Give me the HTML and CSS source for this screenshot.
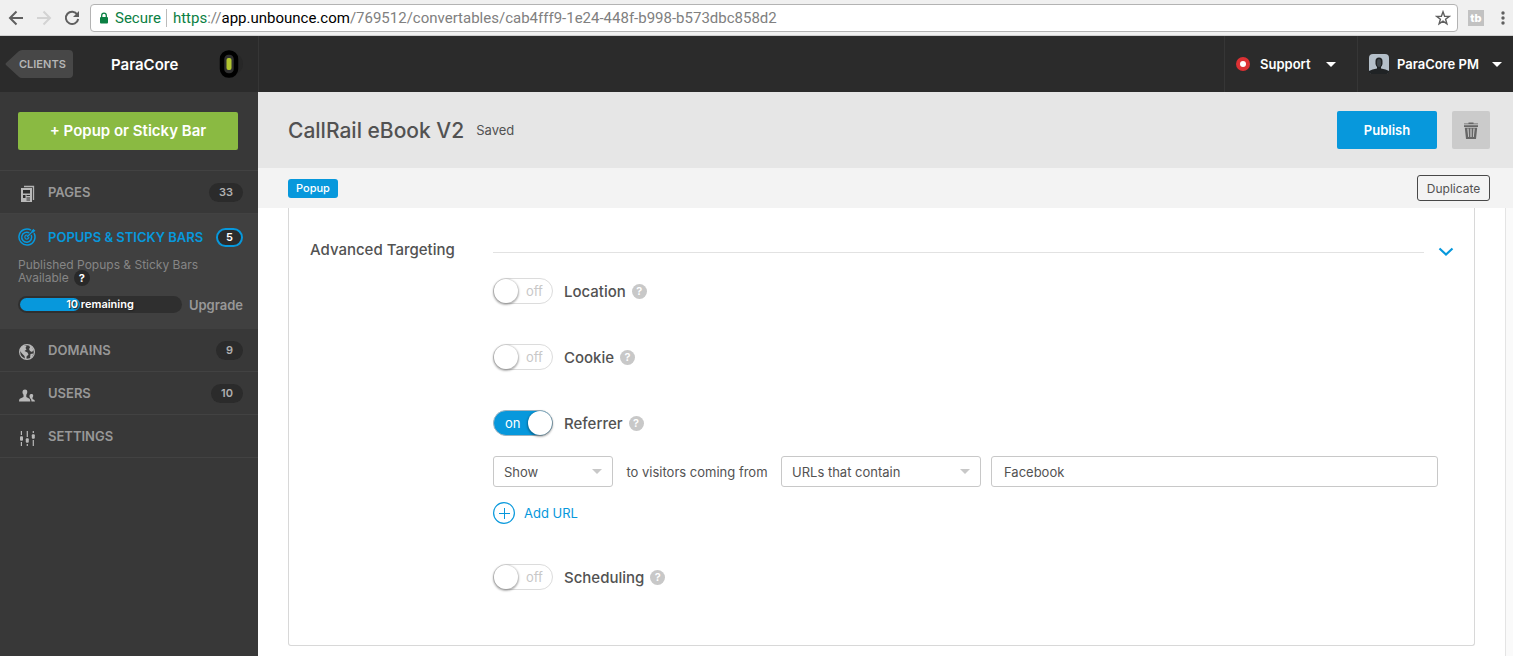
FILE: index.html
```html
<!DOCTYPE html>
<html lang="en">
<head>
    <meta charset="UTF-8">
    <meta name="viewport" content="width=device-width, initial-scale=1">
    <title>CallRail eBook V2</title>
    <link rel="stylesheet" href="styles.css">
</head>
<body>
    <!-- Browser bar -->
    <div class="browser-bar">
        <button type="button" class="browser-btn" aria-label="Back">
            <svg width="16" height="16" viewBox="0 0 16 16" fill="none" stroke="#5f5f5f" stroke-width="2"><path d="M15 8H2.500M8.500 1.500L2 8l6.500 6.500"/></svg>
        </button>
        <button type="button" class="browser-btn" aria-label="Forward">
            <svg width="16" height="16" viewBox="0 0 16 16" fill="none" stroke="#d3d3d3" stroke-width="2"><path d="M1 8h12.500M7.500 1.500L14 8l-6.500 6.500"/></svg>
        </button>
        <button type="button" class="browser-btn" aria-label="Reload">
            <svg width="16" height="16" viewBox="0 0 16 16" fill="none" stroke="#5f5f5f" stroke-width="2"><path d="M13.300 4.500A6.200 6.200 0 1 0 14.200 9"/><path d="M15 1v6H9z" fill="#5f5f5f" stroke="none"/></svg>
        </button>
        <div class="address">
            <svg width="10" height="12" viewBox="0 0 10 12"><rect x="1" y="5" width="8" height="6.500" rx="1" fill="#0b8043"/><path d="M2.700 5.500V3.500a2.300 2.300 0 0 1 4.600 0v2" fill="none" stroke="#0b8043" stroke-width="1.300"/></svg>
            <span class="secure">Secure</span>
            <span class="url"><span class="scheme">https</span>://<span class="host">app.unbounce.com</span>/769512/convertables/cab4fff9-1e24-448f-b998-b573dbc858d2</span>
            <button type="button" class="browser-btn star" aria-label="Bookmark this page">
                <svg width="16" height="16" viewBox="0 0 16 16" fill="none" stroke="#5f5f5f" stroke-width="1.400"><path d="M8 1.800l1.600 4.400 4.700.2-3.700 2.900 1.300 4.500L8 11.200l-3.900 2.600 1.300-4.500L1.700 6.400l4.700-.2z"/></svg>
            </button>
        </div>
        <button type="button" class="browser-btn extension" aria-label="Extension">tb</button>
        <button type="button" class="browser-btn browser-menu" aria-label="Browser menu">
            <svg width="4" height="16" viewBox="0 0 4 16" fill="#5f5f5f"><circle cx="2" cy="3" r="1.700"/><circle cx="2" cy="8" r="1.700"/><circle cx="2" cy="13" r="1.700"/></svg>
        </button>
    </div>

    <!-- App header -->
    <header class="app-header">
        <div class="account">
            <a href="#" class="clients-link">
                <svg width="68" height="28" viewBox="0 0 68 28"><path d="M13.500 1.500Q15 0 17 0H64a4 4 0 0 1 4 4v20a4 4 0 0 1-4 4H17q-2 0-3.500-1.500L1 15q-1-1 0-2z" fill="#474747"/></svg>
                <span>CLIENTS</span>
            </a>
            <span class="client-name">ParaCore</span>
            <svg class="client-logo" width="24" height="28" viewBox="0 0 24 28"><circle cx="13" cy="14" r="11" fill="#272727"/><rect x="3" y="2.500" width="14" height="23" rx="6.500" fill="#303030" stroke="#000" stroke-width="4.500"/><rect x="7.500" y="8" width="5" height="12" rx="2" fill="#b2c52f"/></svg>
        </div>
        <button type="button" class="header-menu support">
            <svg width="14" height="14" viewBox="0 0 14 14"><circle cx="7" cy="7" r="7" fill="#dc3134"/><circle cx="7" cy="7" r="3" fill="#fff"/></svg>
            Support
            <span class="caret"></span>
        </button>
        <button type="button" class="header-menu user">
            <svg width="20" height="20" viewBox="0 0 20 20"><rect width="20" height="20" rx="4" fill="#b4bfc9"/><path d="M6.500 7q0-3.500 3.500-3.500t3.500 3.500v3q-.4 2-1.500 3v1.500q5 .5 8 2.500v1q0 2-4 2H4q-4 0-4-2v-1q3-2 8-2.500V13q-1.100-1-1.500-3z" fill="#202325"/><path d="M8 8q0-3 2-3t2 3v3q-.8 2-2 2t-2-2z" fill="#3d4449"/></svg>
            ParaCore PM
            <span class="caret"></span>
        </button>
    </header>

    <div class="layout">
        <aside class="sidebar">
            <div class="create">
                <button type="button" class="btn btn-create">+ Popup or Sticky Bar</button>
            </div>
            <nav>
                <a href="#" class="nav-item">
                    <svg width="18" height="18" viewBox="0 0 18 18"><path d="M6 1.500h9.500V15" fill="none" stroke="#b3b3b3" stroke-width="1.300"/><path d="M3 3h11v14H3z" fill="#b9b9b9"/><path d="M5 5h7v3.500H5zM5 10h2.500v3H5zM8.500 10H12v1H8.500zM8.500 12.400H12v1H8.500zM8.500 14.500H12v1H8.500z" fill="#2f2f2f"/></svg>
                    <span class="nav-text">PAGES</span>
                    <span class="count">33</span>
                </a>
                <div class="nav-group">
                    <a href="#" class="nav-item active">
                        <svg width="18" height="18" viewBox="0 0 18 18" fill="none" stroke="#0798dc" stroke-width="1.500"><path d="M13 2.100A8 8 0 1 0 16 5.200"/><path d="M11.300 4.900A5 5 0 1 0 13.200 7"/><path d="M9.500 7.200A2 2 0 1 0 10.800 8.800M9 9l6-6" stroke-width="1.200"/><path d="M13.500 4.500l.2-2.200L16 .7l.2 1.300 1.300.2-1.700 2.200z" fill="#0798dc" stroke="none"/></svg>
                        <span class="nav-text">POPUPS &amp; STICKY BARS</span>
                        <span class="count">5</span>
                    </a>
                    <div class="quota-text">
                        Published Popups &amp; Sticky Bars
                        <div class="quota-line">Available <button type="button" class="help-dark" aria-label="About this limit">?</button></div>
                    </div>
                    <div class="quota">
                        <div class="quota-bar"><span class="quota-fill"></span><span class="quota-label">10 remaining</span></div>
                        <a href="#">Upgrade</a>
                    </div>
                </div>
                <a href="#" class="nav-item">
                    <svg width="18" height="18" viewBox="0 0 18 18"><circle cx="9" cy="9" r="7.400" fill="#3b3b3b" stroke="#b9b9b9" stroke-width="1.200"/><path d="M2.500 5l3-2.500 3 .5-1 2 1 1.500L6.500 8l3 1.500 1 2-2 2v2.500H7l-.5-3-2.500-2.500L2 8zM11 2l3 2 1.500 3-1.500 2-2-1-1-2 1-1.500zM12.500 11l3-.5-1.500 3.500-2 1z" fill="#b9b9b9"/></svg>
                    <span class="nav-text">DOMAINS</span>
                    <span class="count">9</span>
                </a>
                <a href="#" class="nav-item">
                    <svg width="18" height="18" viewBox="0 0 18 18" fill="#b9b9b9"><path d="M7 3.500c3 0 2.700 3.500 1.300 5.200V11l3.200 1.700q.8.600.8 2.800H1q0-2.200.8-2.800L5.500 11V8.700C4 7 4 3.500 7 3.500z"/><path d="M13.500 8c2.200 0 2 2.500 1 3.700v1.200q2.500.8 2.500 2.600h-3.500q0-2.500-1.500-3.500c-.8-1.600-.8-4 1.500-4z"/></svg>
                    <span class="nav-text">USERS</span>
                    <span class="count">10</span>
                </a>
                <a href="#" class="nav-item">
                    <svg width="18" height="18" viewBox="0 0 18 18" fill="#b9b9b9"><path d="M2.800 2h1.200v15H2.800zM8.700 2h1.200v15H8.700zM14.700 2h1.200v15h-1.200z"/><path d="M1.500 6h4v7h-4zM7.200 8h4v7h-4zM13.200 4h4v7h-4z" fill="#383838"/><rect x="2" y="7.300" width="3" height="4.500" rx="1"/><rect x="7.800" y="9.300" width="3" height="4.500" rx="1"/><rect x="13.800" y="5.300" width="3" height="4.500" rx="1"/></svg>
                    <span class="nav-text">SETTINGS</span>
                </a>
            </nav>
        </aside>

        <main class="content">
            <div class="title-bar">
                <h1>CallRail eBook V2</h1>
                <span class="status">Saved</span>
                <button type="button" class="btn btn-publish">Publish</button>
                <button type="button" class="btn btn-delete" aria-label="Delete">
                    <svg width="14" height="18" viewBox="0 0 14 18" fill="#666"><path d="M0 2.200V1.500h4.500V.5h5v1H14v.7zM0 3.200h14V5H0zM.8 5.800h12.400L12 17H2z"/><path d="M3.300 6.500h1.300l.4 8.500H4.200zM6.400 6.500h1.200V15H6.400zM9.400 6.500h1.300L9.800 15H9z" fill="#cbcbcb"/></svg>
                </button>
            </div>
            <div class="sub-bar">
                <span class="tag">Popup</span>
                <button type="button" class="btn-duplicate">Duplicate</button>
            </div>

            <div class="page-area">
                <section class="card">
                    <h2>Advanced Targeting</h2>
                    <div class="card-rule">
                        <hr>
                        <button type="button" class="collapse" aria-label="Collapse advanced targeting">
                            <svg width="16" height="10" viewBox="0 0 16 10" fill="none" stroke="#0798dc" stroke-width="2.200"><path d="M1.500 1.500L8 7.500l6.500-6"/></svg>
                        </button>
                    </div>
                    <form class="targeting">
                        <div class="option">
                            <span class="switch"><input type="checkbox" id="location"><span class="state">off</span></span>
                            <label for="location">Location</label>
                            <button type="button" class="help" aria-label="Location help">?</button>
                        </div>
                        <div class="option">
                            <span class="switch"><input type="checkbox" id="cookie"><span class="state">off</span></span>
                            <label for="cookie">Cookie</label>
                            <button type="button" class="help" aria-label="Cookie help">?</button>
                        </div>
                        <div class="option-group">
                            <div class="option">
                                <span class="switch"><input type="checkbox" id="referrer" checked><span class="state">on</span></span>
                                <label for="referrer">Referrer</label>
                                <button type="button" class="help" aria-label="Referrer help">?</button>
                            </div>
                            <div class="rule">
                                <span class="select select-action">
                                    <select id="rule-action" aria-label="Action">
                                        <option>Show</option>
                                        <option>Don't show</option>
                                    </select>
                                </span>
                                <label for="rule-action">to visitors coming from</label>
                                <span class="select select-match">
                                    <select aria-label="Match type">
                                        <option>URLs that contain</option>
                                        <option>URLs that match</option>
                                    </select>
                                </span>
                                <input type="text" class="rule-url" value="Facebook" aria-label="Referrer URL">
                            </div>
                            <button type="button" class="add-url">
                                <svg width="22" height="22" viewBox="0 0 22 22" fill="none" stroke="#0798dc"><circle cx="11" cy="11" r="10.400" stroke-width="1.200"/><path d="M11.500 6v11M6 11.500h11"/></svg>
                                Add URL
                            </button>
                        </div>
                        <div class="option">
                            <span class="switch"><input type="checkbox" id="scheduling"><span class="state">off</span></span>
                            <label for="scheduling">Scheduling</label>
                            <button type="button" class="help" aria-label="Scheduling help">?</button>
                        </div>
                    </form>
                </section>
            </div>
        </main>
    </div>

    <script>
        // keep the on/off text in step with its switch
        document.querySelectorAll('.switch input').forEach(input => {
            input.addEventListener('change', () => {
                input.nextElementSibling.textContent = input.checked ? 'on' : 'off';
            });
        });
    </script>
</body>
</html>
```

FILE: styles.css
```css
:root {
    --blue: #0798dc;
    --green: #8aba42;
    --text: #525252;
    --border: #c8c8c8;
    --dark: #2b2b2b;
    --sidebar: #383838;
}
* {
    box-sizing: border-box;
}
body {
    margin: 0;
    min-height: 100vh;
    display: flex;
    flex-direction: column;
    font-family: Inter, "Liberation Sans", sans-serif;
    font-size: 13px;
    color: var(--text);
    background: #fff;
}
button, input, select {
    font: inherit;
    color: inherit;
}
button {
    padding: 0;
    border: none;
    background: none;
    cursor: pointer;
}
a {
    text-decoration: none;
}
svg {
    display: block;
    flex: none;
}

/* Browser bar */
.browser-bar {
    display: flex;
    align-items: center;
    gap: 12px;
    height: 36px;
    padding: 0 8px;
    background: #f0f0f0;
    border-bottom: 1px solid #d0d0d0;
}
.browser-btn {
    flex: none;
}
.address {
    flex: 1;
    min-width: 0;
    display: flex;
    align-items: center;
    height: 28px;
    margin: 0 -2px;
    padding: 0 6px 0 8px;
    background: #fff;
    border: 1px solid #b3b3b3;
    border-radius: 4px;
    font-family: Roboto, sans-serif;
    font-size: 15px;
}
.secure {
    margin-left: 6px;
    padding-right: 5px;
    border-right: 1px solid #bbb;
    color: #0b8043;
}
.url {
    margin-left: 6px;
    color: #808080;
    white-space: nowrap;
}
.scheme {
    color: #0b8043;
}
.host {
    color: #000;
}
.star {
    margin-left: auto;
}
.extension {
    width: 16px;
    height: 16px;
    background: #c2c2c2;
    color: #fff;
    font-size: 11px;
    font-weight: 800;
    line-height: 16px;
}
.browser-menu {
    margin-left: 5px;
}

/* App header */
.app-header {
    display: flex;
    height: 56px;
    background: var(--dark);
    color: #fff;
    font-weight: 600;
}
.account {
    display: flex;
    align-items: center;
    width: 259px;
    padding-left: 5px;
    border-right: 1px solid #363636;
}
.clients-link {
    display: grid;
    align-items: center;
    color: #b5b5b5;
    font-size: 11px;
}
.clients-link > * {
    grid-area: 1 / 1;
}
.clients-link span {
    padding-left: 14px;
}
.client-name {
    margin-left: 38px;
    font-size: 15px;
}
.client-logo {
    margin-left: auto;
    margin-right: 15px;
}
.header-menu {
    display: flex;
    align-items: center;
    border-left: 1px solid #363636;
}
.support {
    width: 133px;
    margin-left: auto;
    padding: 0 21px 0 11px;
    gap: 10px;
}
.user {
    width: 156px;
    padding: 0 11px;
    gap: 8px;
}
.caret {
    margin-left: auto;
    border: 5px solid transparent;
    border-top-color: #fff;
    border-bottom: none;
}

/* Sidebar */
.layout {
    flex: 1;
    display: flex;
}
.sidebar {
    flex: none;
    width: 258px;
    background: var(--sidebar);
}
.create {
    padding: 20px 20px 20px 18px;
    border-bottom: 1px solid #424242;
}
.btn {
    height: 38px;
    border-radius: 2px;
    color: #fff;
    font-weight: 600;
}
.btn-create {
    width: 100%;
    padding-bottom: 2px;
    background: var(--green);
    font-size: 15px;
}
.nav-item {
    display: flex;
    align-items: center;
    height: 43px;
    padding: 0 15px 0 18px;
    border-bottom: 1px solid #424242;
    color: #989898;
    font-weight: 600;
}
.nav-item > svg {
    margin-top: 4px;
}
.nav-text {
    margin-left: 12px;
}
.count {
    margin-left: auto;
    padding: 0 10px;
    border-radius: 10px;
    background: var(--dark);
    color: #b0b0b0;
    font-size: 11px;
    line-height: 19px;
}
.nav-group {
    padding-bottom: 16px;
    background: #404040;
}
.nav-item.active {
    border: none;
    padding-top: 3px;
    color: var(--blue);
}
.active > svg {
    margin-top: 0;
}
.active .count {
    padding: 0 8px;
    border: 2px solid var(--blue);
    color: #fff;
    line-height: 15px;
}
.quota-text {
    padding: 1px 15px 0 18px;
    color: #868686;
    font-size: 12px;
    line-height: 13px;
}
.quota-line {
    display: flex;
    align-items: center;
    gap: 5px;
    height: 13px;
}
.help-dark {
    width: 16px;
    height: 16px;
    border-radius: 50%;
    background: #292929;
    color: #fff;
    font-size: 11px;
    font-weight: 700;
    line-height: 16px;
}
.quota {
    display: flex;
    align-items: center;
    justify-content: space-between;
    margin-top: 12px;
    padding: 0 15px 0 18px;
}
.quota-bar {
    display: grid;
    align-items: center;
    width: 164px;
    height: 17px;
    padding: 2px;
    border-radius: 9px;
    background: #2f2f2f;
}
.quota-bar > * {
    grid-area: 1 / 1;
}
.quota-fill {
    width: 60px;
    height: 13px;
    border-radius: 7px;
    background: var(--blue);
}
.quota-label {
    text-align: center;
    color: #fff;
    font-size: 11px;
    font-weight: 600;
    line-height: 13px;
    text-shadow: 1px 1px 1px #222;
}
.quota a {
    color: #989898;
    font-weight: 600;
}

/* Main content */
.content {
    flex: 1;
    min-width: 0;
    display: flex;
    flex-direction: column;
}
.title-bar {
    display: flex;
    align-items: center;
    height: 76px;
    padding: 0 23px 0 30px;
    background: #e6e6e6;
}
h1, h2 {
    margin: 0;
    font-weight: 500;
}
h1 {
    font-size: 21px;
}
.status {
    margin-left: 12px;
}
.btn-publish {
    width: 100px;
    margin-left: auto;
    background: var(--blue);
}
.btn-delete {
    display: grid;
    place-items: center;
    width: 38px;
    margin-left: 15px;
    padding-top: 2px;
    background: #cbcbcb;
}
.sub-bar {
    display: flex;
    align-items: center;
    justify-content: space-between;
    height: 40px;
    padding: 0 23px 0 30px;
    background: #f3f3f3;
}
.tag {
    padding: 0 8px;
    border-radius: 3px;
    background: var(--blue);
    color: #fff;
    font-size: 11px;
    font-weight: 500;
    line-height: 19px;
}
.btn-duplicate {
    width: 73px;
    height: 26px;
    border: 1px solid #484848;
    border-radius: 3px;
    font-size: 12px;
}
.page-area {
    flex: 1;
    padding: 0 30px 10px;
    margin-right: 7px;
    border-right: 1px solid #e4e4e4;
    box-shadow: 7px 0 #fafafa;
}
.card {
    display: grid;
    grid-template-columns: 183px 1fr;
    align-items: center;
    padding: 30px 20px 55px 21px;
    border: 1px solid #d8d8d8;
    border-top: none;
    border-radius: 0 0 3px 3px;
}
h2 {
    font-size: 15px;
    line-height: 24px;
}
.card-rule {
    display: flex;
    align-items: center;
    gap: 14px;
    padding-top: 4px;
}
hr {
    flex: 1;
    margin: 0;
    border: none;
    border-top: 1px solid #e2e2e2;
}
.targeting {
    grid-column: 2;
    display: grid;
    gap: 40px;
    padding: 16px 16px 0 0;
}
.option {
    display: flex;
    align-items: center;
    height: 26px;
}
.option label {
    margin: 0 6px 0 11px;
    font-size: 15px;
    font-weight: 500;
}
.help {
    width: 15px;
    height: 15px;
    border-radius: 50%;
    background: #c8c8c8;
    color: #fff;
    font-size: 11px;
    font-weight: 600;
    line-height: 15px;
}
.switch {
    display: grid;
    align-items: center;
    width: 60px;
    height: 26px;
}
.switch > * {
    grid-area: 1 / 1;
}
.switch input {
    appearance: none;
    display: flex;
    width: 60px;
    height: 26px;
    margin: 0;
    border: 1px solid #dcdcdc;
    border-radius: 13px;
    background: #fff;
    cursor: pointer;
}
.switch input::before {
    content: "";
    width: 24px;
    height: 24px;
    border-radius: 50%;
    background: #fff;
    box-shadow: 0 1px 2px 1px rgba(0, 0, 0, 0.3);
}
.switch input:checked {
    justify-content: flex-end;
    border-color: #9fb4c0;
    background: var(--blue);
}
.state {
    padding-left: 33px;
    color: #c8c8c8;
    pointer-events: none;
}
.switch input:checked + .state {
    padding-left: 12px;
    color: #fff;
}
.rule {
    display: flex;
    align-items: center;
    gap: 10px;
    margin: 20px 0 15px;
}
.rule label {
    flex: none;
    width: 148px;
    text-align: center;
}
.select {
    display: grid;
    align-items: center;
}
.select > *, .select::after {
    grid-area: 1 / 1;
}
.select::after {
    content: "";
    justify-self: end;
    margin-right: 11px;
    border: 5px solid transparent;
    border-top-color: #c8c8c8;
    border-bottom: none;
    pointer-events: none;
}
.select-action {
    width: 120px;
}
.select-match {
    width: 200px;
}
select, .rule-url {
    width: 100%;
    height: 31px;
    padding: 0 10px;
    border: 1px solid var(--border);
    border-radius: 3px;
    background: #fff;
}
select {
    appearance: none;
}
.rule-url {
    flex: 1;
    min-width: 0;
    padding: 0 12px;
}
.add-url {
    display: flex;
    align-items: center;
    gap: 9px;
    color: var(--blue);
}
```
